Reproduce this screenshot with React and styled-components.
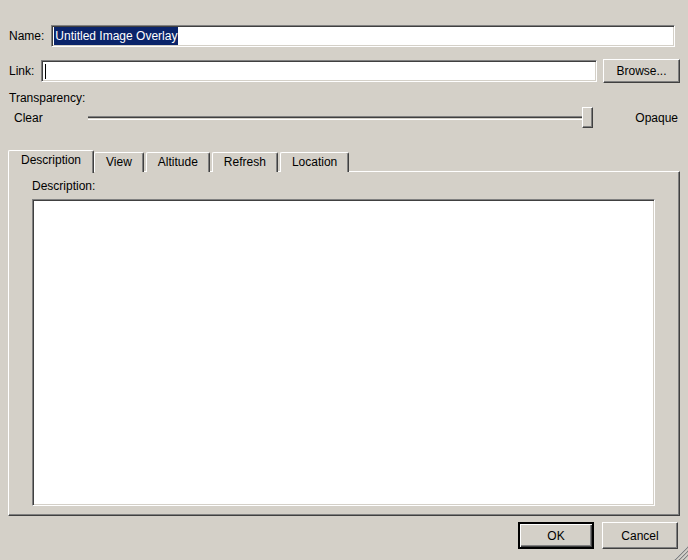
import React, { useState } from "react";
import styled, { createGlobalStyle, css } from "styled-components";

const GlobalStyle = createGlobalStyle`
  html, body {
    margin: 0;
    padding: 0;
    background: #d4d0c8;
  }
  body {
    font-family: "Liberation Sans", Arial, sans-serif;
    font-size: 12px;
    color: #000;
  }
`;

const tabs = ["Description", "View", "Altitude", "Refresh", "Location"];

const App = () => {
  const [active, setActive] = useState(0);

  return (
    <Window>
      <GlobalStyle />
      <Content>
        <Row>
          <Label>Name:</Label>
          <Field $grow $trim={5}>
            <Selected>Untitled Image Overlay</Selected>
          </Field>
        </Row>
        <Row $top={12}>
          <Label>Link:</Label>
          <Field $grow>
            <Caret />
          </Field>
          <Button>Browse...</Button>
        </Row>
        <Caption>Transparency:</Caption>
        <SliderRow>
          <SliderLabel>Clear</SliderLabel>
          <Track>
            <Groove />
            <Thumb />
          </Track>
          <SliderLabel $right>Opaque</SliderLabel>
        </SliderRow>

        <TabBar>
          {tabs.map((t, i) => (
            <Tab key={t} $active={i === active} onClick={() => setActive(i)}>
              {t}
            </Tab>
          ))}
        </TabBar>
        <Panel>
          <PanelLabel>Description:</PanelLabel>
          <TextArea />
        </Panel>
      </Content>

      <Footer>
        <Button $default $wide>
          OK
        </Button>
        <Button $wide>Cancel</Button>
      </Footer>

      <Grip width="16" height="16" viewBox="0 0 16 16">
        <path d="M15 3 L3 15 M15 7 L7 15 M15 11 L11 15" stroke="#fff" strokeWidth="1" />
        <path d="M16 3 L3 16 M16 7 L7 16 M16 11 L11 16" stroke="#808080" strokeWidth="1.2" />
      </Grip>
    </Window>
  );
};

export default App;

const Window = styled.div`
  position: relative;
  width: 688px;
  height: 560px;
  display: flex;
  flex-direction: column;
  overflow: hidden;
`;

const Content = styled.div`
  flex: 1;
  display: flex;
  flex-direction: column;
  padding: 25px 8px 0 8px;
`;

const Row = styled.div`
  display: flex;
  align-items: center;
  gap: 7px;
  margin-top: ${(p) => p.$top || 0}px;
  padding-left: 1px;
`;

const Label = styled.span`
  white-space: nowrap;
  line-height: 14px;
`;

const sunken = css`
  border: 1px solid;
  border-color: #808080 #fff #fff #808080;
  box-shadow: inset 1px 1px #404040, inset -1px -1px #d4d0c8;
`;

const raised = css`
  border: 1px solid;
  border-color: #fff #404040 #404040 #fff;
  box-shadow: inset -1px -1px #808080, inset 1px 1px #d4d0c8;
`;

const Field = styled.div`
  ${sunken};
  box-sizing: border-box;
  height: 22px;
  background: #fff;
  display: flex;
  align-items: center;
  padding: 0 2px;
  flex: ${(p) => (p.$grow ? 1 : "none")};
  margin-right: ${(p) => p.$trim || 0}px;
`;

const Selected = styled.span`
  background: #0a246a;
  color: #fff;
  line-height: 18px;
  padding: 0 1px;
`;

const Caret = styled.span`
  display: block;
  width: 1px;
  height: 15px;
  margin-left: 1px;
  background: #000;
`;

const Button = styled.button`
  ${raised};
  box-sizing: border-box;
  background: #d4d0c8;
  font-family: inherit;
  font-size: 12px;
  color: #000;
  height: ${(p) => (p.$wide ? 27 : 24)}px;
  width: ${(p) => (p.$wide ? 76 : 77)}px;
  padding: 0;
  margin-left: ${(p) => (p.$wide ? 0 : -1)}px;
  ${(p) =>
    p.$default &&
    css`
      border: 2px solid #000;
      box-shadow: inset 1px 1px #fff, inset -1px -1px #404040,
        inset -2px -2px #808080;
    `}
`;

const Caption = styled.div`
  margin-top: 8px;
  padding-left: 1px;
  line-height: 14px;
`;

const SliderRow = styled.div`
  display: flex;
  align-items: center;
  height: 21px;
  margin-top: 2px;
`;

const SliderLabel = styled.span`
  width: ${(p) => (p.$right ? 85 : 74)}px;
  padding-left: ${(p) => (p.$right ? 0 : 6)}px;
  padding-right: ${(p) => (p.$right ? 2 : 0)}px;
  text-align: ${(p) => (p.$right ? "right" : "left")};
  flex: none;
`;

const Track = styled.div`
  position: relative;
  flex: 1;
  height: 21px;
  display: flex;
  align-items: center;
`;

const Groove = styled.div`
  flex: 1;
  height: 4px;
  box-sizing: border-box;
  border-top: 1px solid #808080;
  border-bottom: 1px solid #fff;
  background: #d4d0c8;
  box-shadow: inset 0 1px #404040;
`;

const Thumb = styled.div`
  ${raised};
  position: absolute;
  right: 0;
  top: 0;
  width: 11px;
  height: 21px;
  box-sizing: border-box;
  background: #d4d0c8;
`;

const TabBar = styled.div`
  display: flex;
  align-items: flex-end;
  height: 23px;
  margin-top: 21px;
  margin-bottom: -1px;
  padding-left: 2px;
  position: relative;
  z-index: 1;
`;

const Tab = styled.div`
  box-sizing: border-box;
  height: 20px;
  line-height: 18px;
  padding: 0 11px;
  margin-right: 2px;
  background: #d4d0c8;
  border: 1px solid;
  border-color: #fff #404040 transparent #fff;
  border-bottom: none;
  border-radius: 2px 2px 0 0;
  box-shadow: inset -1px 0 #808080;
  cursor: default;
  ${(p) =>
    p.$active &&
    css`
      height: 23px;
      padding: 0 12px 3px;
      margin: 0 0 -1px -2px;
    `}
`;

const Panel = styled.div`
  ${raised};
  box-sizing: border-box;
  height: 345px;
  display: flex;
  flex-direction: column;
  padding: 7px 24px 9px 23px;
`;

const PanelLabel = styled.div`
  line-height: 14px;
  margin-bottom: 6px;
`;

const TextArea = styled.div`
  ${sunken};
  flex: 1;
  background: #fff;
`;

const Footer = styled.div`
  display: flex;
  justify-content: flex-end;
  gap: 8px;
  padding: 0 10px 11px 0;
`;

const Grip = styled.svg`
  position: absolute;
  right: 0;
  bottom: 0;
`;
